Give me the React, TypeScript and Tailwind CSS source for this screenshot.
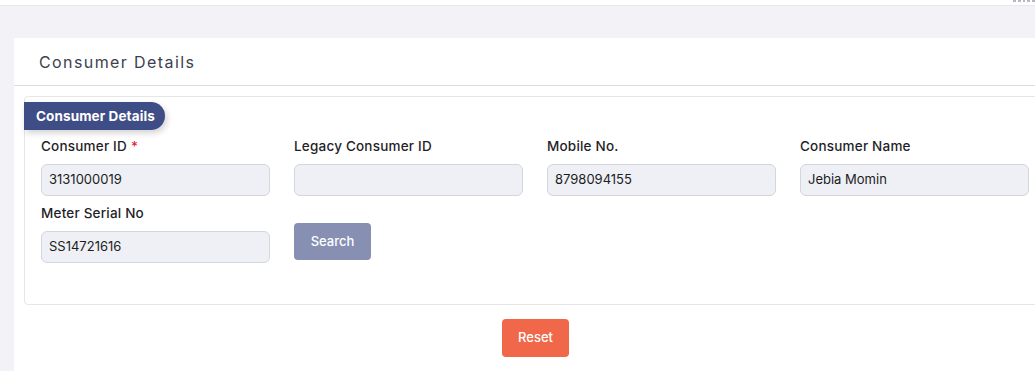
import React from "react";

const font = { fontFamily: "Inter, 'Noto Sans', sans-serif" };

function Field({ label, value, required }: { label: string; value: string; required?: boolean }) {
  return (
    <div className="flex flex-col w-[229px]">
      <div className="h-[20px] leading-[20px] mb-[8px] text-[13.5px] tracking-[0.2px] font-medium text-[#1f1f2a] whitespace-nowrap">
        {label}
        {required && <span className="text-[#e11d2e] ml-[4px]">*</span>}
      </div>
      <div className="h-[32px] rounded-[6px] border border-[#d3d6dd] bg-[#eef0f5] px-[7px] flex items-center text-[13px] text-[#1c1c24]">
        {value}
      </div>
    </div>
  );
}

export default function App() {
  return (
    <div className="w-[1035px] h-[371px] overflow-hidden bg-[#f3f2f7]" style={font}>
      <div className="h-[6px] bg-white border-b border-[#e7e6ee] relative">
        <div className="absolute right-0 top-0 w-[22px] h-[2px] flex gap-[2px]">
          <span className="w-[3px] h-[2px] bg-[#b8b8c4]" />
          <span className="w-[3px] h-[2px] bg-[#b8b8c4]" />
          <span className="w-[3px] h-[2px] bg-[#b8b8c4]" />
          <span className="w-[3px] h-[2px] bg-[#b8b8c4]" />
          <span className="w-[3px] h-[2px] bg-[#b8b8c4]" />
        </div>
      </div>
      <div className="pt-[32px] pl-[14px]">
        <div className="w-[1043px] bg-white h-[400px]">
          <div className="h-[48px] border-b border-[#dcdcdc] flex items-center px-[25px]">
            <span className="text-[16px] tracking-[1.4px] text-[#3c4150]">Consumer Details</span>
          </div>
          <div className="pt-[10px] px-[10px]">
            <div className="border border-[#e6e6e6] rounded-[4px] h-[209px] pt-[5px]">
              <div className="-ml-px inline-flex items-center h-[28px] pl-[12px] pr-[10px] bg-[#3f4d86] rounded-r-full text-white text-[13.5px] tracking-[0.1px] font-bold shadow-[2px_3px_6px_rgba(0,0,0,0.18)]">
                Consumer Details
              </div>
              <div className="px-[16px] pt-[6px] flex flex-col gap-[7px]">
                <div className="flex gap-[24px]">
                  <Field label="Consumer ID" value="3131000019" required />
                  <Field label="Legacy Consumer ID" value="" />
                  <Field label="Mobile No." value="8798094155" />
                  <Field label="Consumer Name" value="Jebia Momin" />
                </div>
                <div className="flex gap-[24px]">
                  <Field label="Meter Serial No" value="SS14721616" />
                  <div className="pt-[20px]">
                    <button className="w-[77px] h-[37px] rounded-[4px] bg-[#8790b3] text-white text-[13px] font-medium">
                      Search
                    </button>
                  </div>
                </div>
              </div>
            </div>
            <div className="flex justify-center pt-[14px]">
              <button className="w-[67px] h-[38px] rounded-[4px] bg-[#f0674a] text-white text-[13px] font-medium">
                Reset
              </button>
            </div>
          </div>
        </div>
      </div>
    </div>
  );
}
